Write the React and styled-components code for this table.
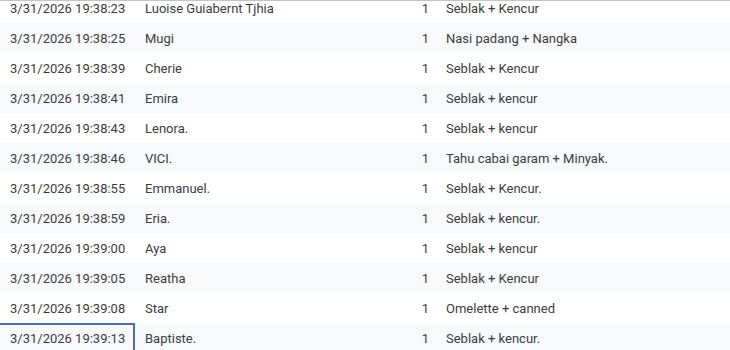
import styled, { createGlobalStyle } from "styled-components"

const rows = [
    ["3/31/2026 19:38:23", "Luoise Guiabernt Tjhia", "1", "Seblak + Kencur"],
    ["3/31/2026 19:38:25", "Mugi", "1", "Nasi padang + Nangka"],
    ["3/31/2026 19:38:39", "Cherie", "1", "Seblak + Kencur"],
    ["3/31/2026 19:38:41", "Emira", "1", "Seblak + kencur"],
    ["3/31/2026 19:38:43", "Lenora.", "1", "Seblak + kencur"],
    ["3/31/2026 19:38:46", "VICI.", "1", "Tahu cabai garam + Minyak."],
    ["3/31/2026 19:38:55", "Emmanuel.", "1", "Seblak + Kencur."],
    ["3/31/2026 19:38:59", "Eria.", "1", "Seblak + kencur."],
    ["3/31/2026 19:39:00", "Aya", "1", "Seblak + kencur"],
    ["3/31/2026 19:39:05", "Reatha", "1", "Seblak + Kencur"],
    ["3/31/2026 19:39:08", "Star", "1", "Omelette + canned"],
    ["3/31/2026 19:39:13", "Baptiste.", "1", "Seblak + kencur."],
]

const GlobalStyle = createGlobalStyle`
    html, body {
        margin: 0;
        padding: 0;
        background: #ffffff;
    }
    body {
        font-family: Roboto, "Liberation Sans", sans-serif;
    }
`

const Sheet = styled.div`
    width: 730px;
    height: 350px;
    overflow: hidden;
    border-top: 1px solid #c4c4c4;
    box-sizing: border-box;
`

const Rows = styled.div`
    margin-top: -8px;
`

const Row = styled.div`
    display: grid;
    grid-template-columns: 135px 260px 41px 1fr;
    height: 30px;
    align-items: center;
    background: ${(p) => (p.$shade ? "#f8f9fa" : "#ffffff")};
    color: #3c3c3c;
    font-size: 13px;
`

const Cell = styled.div`
    position: relative;
    height: 100%;
    display: flex;
    align-items: center;
    justify-content: ${(p) => (p.$num ? "flex-end" : "flex-start")};
    padding: ${(p) => (p.$num ? "0 7px 0 0" : "0 0 0 10px")};
    white-space: nowrap;
    overflow: hidden;

    ${(p) => p.$selected && `
        overflow: visible;
        &::after {
            content: "";
            position: absolute;
            left: -2px;
            top: 0;
            right: 0;
            bottom: -2px;
            border: 2px solid #4d6fa3;
        }
    `}
`

export default function App() {
    return (
        <>
            <GlobalStyle />
            <Sheet>
                <Rows>
                    {rows.map((r, i) => (
                        <Row key={r[0]} $shade={i % 2 === 1}>
                            <Cell $selected={i === rows.length - 1}>{r[0]}</Cell>
                            <Cell>{r[1]}</Cell>
                            <Cell $num>{r[2]}</Cell>
                            <Cell>{r[3]}</Cell>
                        </Row>
                    ))}
                </Rows>
            </Sheet>
        </>
    )
}
